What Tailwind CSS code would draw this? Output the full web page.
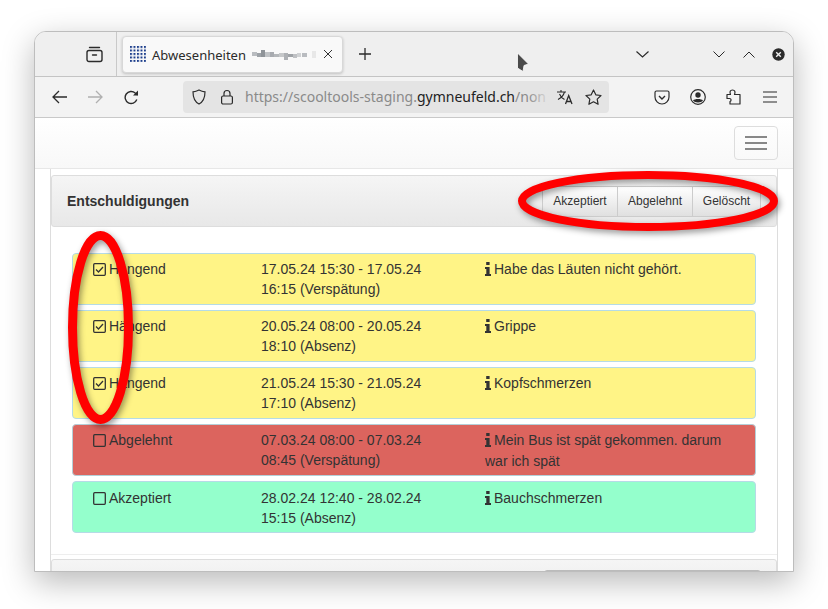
<!DOCTYPE html>
<html lang="de">
  <head>
    <meta charset="UTF-8" />
    <title>Entschuldigungen</title>
    <script src="https://cdn.jsdelivr.net/npm/@tailwindcss/browser@4"></script>
  </head>
  <body class="bg-white h-[609px] w-[828px] overflow-hidden relative">
    <!-- Browser window -->
    <div class="ml-[34px] mt-[31px] w-[760px] h-[541px] border border-[#bdbdbd] rounded-t-[12px] overflow-hidden flex flex-col shadow-[0_10px_32px_rgba(0,0,0,0.28)] bg-white">
      <!-- Tab bar -->
      <div class="h-[45px] shrink-0 flex items-center bg-[#efefef] border-b border-[#c4c4c4] font-['Noto_Sans',sans-serif] text-[#2b2b2b]">
        <div class="w-[82px] h-full flex items-center justify-end border-r border-[#c9c9c9] pr-[13px]">
          <svg width="17" height="17" viewBox="0 0 17 17" fill="none" stroke="#2b2b2b" stroke-width="1.4"><path d="M3.5 1.5h10" stroke-linecap="round"/><rect x="1" y="4.5" width="15" height="11" rx="2"/><path d="M6.5 9h4" stroke-linecap="round"/></svg>
        </div>
        <div class="ml-[5px] w-[221px] h-[37px] bg-[#f9f9f9] rounded-[4px] border border-[#d8d8d8] shadow-[0_1px_3px_rgba(0,0,0,0.2)] flex items-center pl-[7px]">
          <svg width="16" height="16" viewBox="0 0 16 16" class="shrink-0">
            <defs><pattern id="dots" width="3.5" height="3.5" patternUnits="userSpaceOnUse"><rect width="2" height="2" fill="#1d3f8c"/></pattern></defs>
            <rect width="16" height="16" fill="url(#dots)"/>
          </svg>
          <span class="ml-[6px] pt-[2px] text-[13px] leading-none">Abwesenheiten</span>
          <!-- blurred part of the title -->
          <svg width="66" height="12" viewBox="0 0 66 12" class="ml-[6px] mt-[2px] shrink-0" shape-rendering="crispEdges">
            <rect x="0" y="3" width="5" height="4" fill="#b9bcc0"/><rect x="5" y="4" width="4" height="4" fill="#9ea3a8"/><rect x="9" y="1" width="4" height="7" fill="#8f9499"/><rect x="13" y="3" width="5" height="5" fill="#c0c3c6"/><rect x="18" y="3" width="4" height="5" fill="#a8abb0"/><rect x="22" y="5" width="5" height="3" fill="#b4b7ba"/><rect x="27" y="4" width="5" height="4" fill="#c6c8ca"/><rect x="32" y="4" width="4" height="7" fill="#aeb1b5"/><rect x="36" y="5" width="5" height="3" fill="#9fa3a7"/><rect x="41" y="5" width="4" height="4" fill="#bfc1c4"/><rect x="45" y="4" width="4" height="4" fill="#d0d2d4"/><rect x="50" y="4" width="5" height="4" fill="#b9bcc0"/><rect x="60" y="2" width="4" height="7" fill="#e8e8e8"/>
          </svg>
          <svg width="10" height="10" viewBox="0 0 10 10" class="shrink-0 ml-[5px]" fill="none" stroke="#333" stroke-width="1"><path d="M1 1l8 8M9 1l-8 8"/></svg>
        </div>
        <svg width="12" height="12" viewBox="0 0 12 12" class="ml-[16px] shrink-0" fill="none" stroke="#2b2b2b" stroke-width="1.3"><path d="M6 0v12M0 6h12"/></svg>
        <div class="flex-1"></div>
        <svg width="13" height="7" viewBox="0 0 13 7" class="mr-[64px]" fill="none" stroke="#2b2b2b" stroke-width="1.2"><path d="M.5.5l6 5.5 6-5.5"/></svg>
        <svg width="12" height="7" viewBox="0 0 12 7" class="mr-[18px]" fill="none" stroke="#2b2b2b" stroke-width="1"><path d="M.5.5L6 6l5.5-5.5"/></svg>
        <svg width="12" height="7" viewBox="0 0 12 7" class="mr-[17px]" fill="none" stroke="#2b2b2b" stroke-width="1"><path d="M.5 6.5L6 1l5.5 5.5"/></svg>
        <svg width="13" height="13" viewBox="0 0 13 13" class="mr-[8px]"><circle cx="6.5" cy="6.5" r="6.2" fill="#2b2b2b"/><path d="M4.2 4.2l4.6 4.6M8.8 4.2l-4.6 4.6" stroke="#efefef" stroke-width="1.4"/></svg>
      </div>

      <!-- Toolbar -->
      <div class="h-[41px] shrink-0 flex items-center bg-[#f3f3f3] border-b border-[#c9c9c9] font-['Noto_Sans',sans-serif]">
        <svg width="15" height="14" viewBox="0 0 15 14" class="ml-[17px] shrink-0" fill="none" stroke="#2b2b2b" stroke-width="1.3"><path d="M15 7H1M7 1L1 7l6 6"/></svg>
        <svg width="15" height="14" viewBox="0 0 15 14" class="ml-[21px] shrink-0" fill="none" stroke="#b0b0b0" stroke-width="1.3"><path d="M0 7h14M8 1l6 6-6 6"/></svg>
        <svg width="15" height="15" viewBox="0 0 15 15" class="ml-[21px] shrink-0" fill="none" stroke="#2b2b2b" stroke-width="1.4"><path d="M12.8 9.5A6 6 0 1 1 11.2 3L13.6 5"/><path d="M14 .6v5H9" fill="#2b2b2b" stroke="none"/></svg>
        <div class="ml-[44px] w-[426px] h-[32px] shrink-0 bg-[#e4e4e4] rounded-[4px] flex items-center pl-[8px]">
          <svg width="16" height="16" viewBox="0 0 16 16" class="shrink-0" fill="none" stroke="#2b2b2b" stroke-width="1.2"><path d="M8 1c2 1 4 1.600 6 1.800 0 6-1.500 10-6 12.200C3.500 12.800 2 8.800 2 2.800 4 2.600 6 2 8 1z"/></svg>
          <svg width="14" height="16" viewBox="0 0 14 16" class="ml-[13px] shrink-0" fill="none" stroke="#2b2b2b" stroke-width="1.2"><rect x="1.600" y="7" width="10.800" height="8" rx="1.500"/><path d="M4 7V4.500a3 3 0 0 1 6 0V7"/></svg>
          <div class="ml-[11px] w-[305px] h-[20px] overflow-hidden whitespace-nowrap text-[14px] leading-[20px] text-[#8a8a8a] relative">https://scooltools-staging.<span class="text-[#222]">gymneufeld.ch</span>/non<div class="absolute top-0 right-0 w-[22px] h-full bg-gradient-to-r from-transparent to-[#e4e4e4]"></div></div>
          <svg width="17" height="16" viewBox="0 0 17 16" class="ml-[7px] shrink-0" fill="none" stroke="#2b2b2b" stroke-width="1.100"><path d="M0 3h9M4 1v2M7.500 3C6.500 6.500 4 9 1 10.500M2.500 5c1 2.500 3 4.500 5 5.500"/><path d="M8.500 15l3.200-8.500 3.300 8.500M9.600 12.500h4.400" stroke-width="1.300"/></svg>
          <svg width="17" height="16" viewBox="0 0 17 16" class="ml-[11px] shrink-0" fill="none" stroke="#2b2b2b" stroke-width="1.200"><path d="M8.500 1l2.300 4.800 5.200.7-3.800 3.600.9 5.200-4.600-2.500-4.600 2.500.9-5.200L1 6.500l5.200-.7z" stroke-linejoin="round"/></svg>
        </div>
        <svg width="16" height="15" viewBox="0 0 16 15" class="ml-[45px] shrink-0" fill="none" stroke="#2b2b2b" stroke-width="1.200"><path d="M2.500 1h11A1.500 1.500 0 0 1 15 2.500V7a7 7 0 0 1-14 0V2.500A1.500 1.500 0 0 1 2.500 1z"/><path d="M5 6l3 3 3-3" stroke-width="1.400"/></svg>
        <svg width="16" height="16" viewBox="0 0 16 16" class="ml-[20px] shrink-0"><circle cx="8" cy="8" r="7.300" fill="none" stroke="#2b2b2b" stroke-width="1.200"/><circle cx="8" cy="6" r="2.700" fill="#2b2b2b"/><path d="M3 11.500c1.500-2 8.500-2 10 0-1.500 2.600-8.500 2.600-10 0z" fill="#2b2b2b"/></svg>
        <svg width="15" height="16" viewBox="0 0 15 16" class="ml-[20px] shrink-0" fill="none" stroke="#2b2b2b" stroke-width="1.200"><path d="M1 5.500h3.500C3.500 3 4 1 6.500 1S9.500 3 8.500 5.500H14V15H4v-2.500c1.500-.5 1.500-3-.5-3H1z" stroke-linejoin="round"/></svg>
        <svg width="14" height="12" viewBox="0 0 14 12" class="ml-[22px] shrink-0" fill="none" stroke="#2b2b2b" stroke-width="1.200"><path d="M0 1h14M0 6h14M0 11h14"/></svg>
      </div>

      <!-- Page -->
      <div class="flex-1 min-h-0 overflow-hidden bg-white font-['Liberation_Sans',Arial,sans-serif] text-[14px] leading-[20px] text-[#333]">
        <!-- Navbar -->
        <div class="h-[51px] flex items-start justify-end pr-[15px] pt-[8px] bg-gradient-to-b from-white to-[#f8f8f8] border-b border-[#e7e7e7]">
          <div class="w-[44px] h-[34px] border border-[#dddddd] rounded-[4px] flex flex-col items-center justify-center gap-[4px]">
            <div class="w-[22px] h-[2px] bg-[#888]"></div>
            <div class="w-[22px] h-[2px] bg-[#888]"></div>
            <div class="w-[22px] h-[2px] bg-[#888]"></div>
          </div>
        </div>

        <!-- Panel group -->
        <div class="ml-[15px] mr-[15px] border-x border-[#dddddd] pt-[6px]">
          <div class="h-[52px] flex items-center justify-between pl-[15px] pr-[15px] rounded-[3px] border border-[#dddddd] bg-gradient-to-b from-[#f5f5f5] to-[#e8e8e8]">
            <h3 class="text-[14px] font-bold">Entschuldigungen</h3>
            <div class="flex h-[31px] text-[12px] leading-[18px] border border-[#cccccc] rounded-[3px] overflow-hidden bg-gradient-to-b from-white to-[#e0e0e0]">
              <div class="w-[75px] flex items-center justify-center border-r border-[#cccccc]">Akzeptiert</div>
              <div class="w-[75px] flex items-center justify-center border-r border-[#cccccc]">Abgelehnt</div>
              <div class="w-[67px] flex items-center justify-center">Gelöscht</div>
            </div>
          </div>

          <div class="pt-[26px] pb-[21px] pl-[21px] pr-[21px] border-b border-[#eeeeee] flex flex-col gap-[5px]">
            <!-- Row -->
            <div class="h-[52px] flex pt-[5px] pl-[20px] bg-[#fff486] border border-[#b5dbe6] rounded-[4px]">
              <div class="w-[168px] flex items-start">
                <svg width="13" height="13" viewBox="0 0 13 13" class="mt-[4px] mr-[3px] shrink-0" fill="none" stroke="#333" stroke-width="1.300"><rect x=".7" y=".7" width="11.600" height="11.600" rx="1"/><path d="M3 6.500l2.500 2.500 4.500-5"/></svg>
                <span>Hängend</span>
              </div>
              <div class="w-[224px] pr-[28px]">17.05.24 15:30 - 17.05.24 16:15 (Verspätung)</div>
              <div class="w-[255px] leading-[21px]"><svg width="6" height="14" viewBox="0 0 6 14" class="inline-block align-[-2px] mr-[3px]" fill="#333"><path d="M1.200 0h3.400v3H1.200zM0 5h4.600v7H6v2H0v-2h1.300V7H0z"/></svg>Habe das Läuten nicht gehört.</div>
            </div>
            <div class="h-[52px] flex pt-[5px] pl-[20px] bg-[#fff486] border border-[#b5dbe6] rounded-[4px]">
              <div class="w-[168px] flex items-start">
                <svg width="13" height="13" viewBox="0 0 13 13" class="mt-[4px] mr-[3px] shrink-0" fill="none" stroke="#333" stroke-width="1.300"><rect x=".7" y=".7" width="11.600" height="11.600" rx="1"/><path d="M3 6.500l2.500 2.500 4.500-5"/></svg>
                <span>Hängend</span>
              </div>
              <div class="w-[224px] pr-[28px]">20.05.24 08:00 - 20.05.24 18:10 (Absenz)</div>
              <div class="w-[255px] leading-[21px]"><svg width="6" height="14" viewBox="0 0 6 14" class="inline-block align-[-2px] mr-[3px]" fill="#333"><path d="M1.200 0h3.400v3H1.200zM0 5h4.600v7H6v2H0v-2h1.300V7H0z"/></svg>Grippe</div>
            </div>
            <div class="h-[52px] flex pt-[5px] pl-[20px] bg-[#fff486] border border-[#b5dbe6] rounded-[4px]">
              <div class="w-[168px] flex items-start">
                <svg width="13" height="13" viewBox="0 0 13 13" class="mt-[4px] mr-[3px] shrink-0" fill="none" stroke="#333" stroke-width="1.300"><rect x=".7" y=".7" width="11.600" height="11.600" rx="1"/><path d="M3 6.500l2.500 2.500 4.500-5"/></svg>
                <span>Hängend</span>
              </div>
              <div class="w-[224px] pr-[28px]">21.05.24 15:30 - 21.05.24 17:10 (Absenz)</div>
              <div class="w-[255px] leading-[21px]"><svg width="6" height="14" viewBox="0 0 6 14" class="inline-block align-[-2px] mr-[3px]" fill="#333"><path d="M1.200 0h3.400v3H1.200zM0 5h4.600v7H6v2H0v-2h1.300V7H0z"/></svg>Kopfschmerzen</div>
            </div>
            <div class="h-[52px] flex pt-[5px] pl-[20px] bg-[#dc645e] border border-[#b5cfd8] rounded-[4px]">
              <div class="w-[168px] flex items-start">
                <svg width="13" height="13" viewBox="0 0 13 13" class="mt-[4px] mr-[3px] shrink-0" fill="none" stroke="#333" stroke-width="1.300"><rect x=".7" y=".7" width="11.600" height="11.600" rx="1"/></svg>
                <span>Abgelehnt</span>
              </div>
              <div class="w-[224px] pr-[28px]">07.03.24 08:00 - 07.03.24 08:45 (Verspätung)</div>
              <div class="w-[255px] leading-[21px]"><svg width="6" height="14" viewBox="0 0 6 14" class="inline-block align-[-2px] mr-[3px]" fill="#333"><path d="M1.200 0h3.400v3H1.200zM0 5h4.600v7H6v2H0v-2h1.300V7H0z"/></svg>Mein Bus ist spät gekommen. darum war ich spät</div>
            </div>
            <div class="h-[52px] flex pt-[6px] pl-[20px] bg-[#94ffcc] border border-[#b5dbe6] rounded-[4px]">
              <div class="w-[168px] flex items-start">
                <svg width="13" height="13" viewBox="0 0 13 13" class="mt-[4px] mr-[3px] shrink-0" fill="none" stroke="#333" stroke-width="1.300"><rect x=".7" y=".7" width="11.600" height="11.600" rx="1"/></svg>
                <span>Akzeptiert</span>
              </div>
              <div class="w-[224px] pr-[28px]">28.02.24 12:40 - 28.02.24 15:15 (Absenz)</div>
              <div class="w-[255px] leading-[21px]"><svg width="6" height="14" viewBox="0 0 6 14" class="inline-block align-[-2px] mr-[3px]" fill="#333"><path d="M1.200 0h3.400v3H1.200zM0 5h4.600v7H6v2H0v-2h1.300V7H0z"/></svg>Bauchschmerzen</div>
            </div>
          </div>

          <!-- Next panel, cut off by the window -->
          <div class="mt-[4px] h-[52px] rounded-[3px] border border-[#dddddd] bg-gradient-to-b from-[#f5f5f5] to-[#e8e8e8] flex justify-end pt-[10px] pr-[15px]">
            <div class="w-[217px] h-[31px] border border-[#bbbbbb] rounded-[3px]"></div>
          </div>
        </div>
      </div>
    </div>

    <!-- Mouse cursor -->
    <svg width="14" height="22" viewBox="0 0 14 22" class="absolute left-[516px] top-[52px]"><path d="M1.500 1L12.500 12 8 13.500 7 19.500 1.500 16z" fill="#4a4a4a" stroke="#fff" stroke-width=".8"/></svg>

    <!-- Red annotations drawn over the screenshot -->
    <svg width="828" height="609" viewBox="0 0 828 609" class="absolute left-0 top-0 pointer-events-none" fill="none" stroke="#ff0000" style="filter:drop-shadow(2px 3px 3px rgba(0,0,0,0.4))">
      <ellipse cx="648" cy="201" rx="126" ry="26" stroke-width="8"/>
      <ellipse cx="100.500" cy="327.500" rx="28" ry="92" stroke-width="9"/>
    </svg>
  </body>
</html>
